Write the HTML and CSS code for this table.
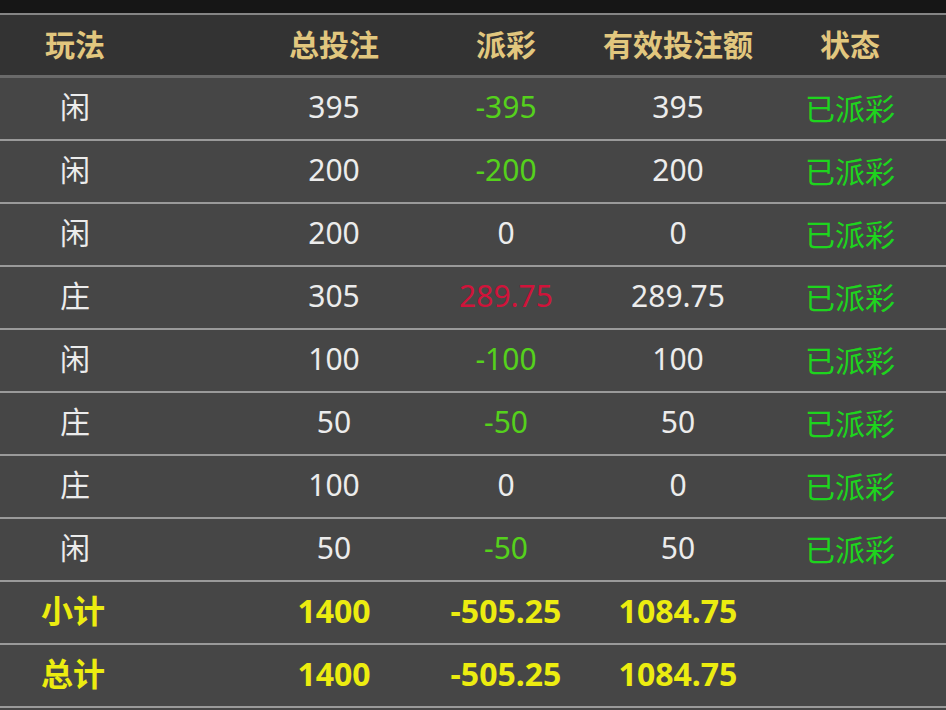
FILE: index.html
```html
<!DOCTYPE html>
<html lang="zh-CN">
<head>
  <meta charset="UTF-8">
  <meta name="viewport" content="width=device-width, initial-scale=1.0">
  <title>投注记录</title>
  <link rel="stylesheet" href="styles.css">
</head>
<body>
  <div class="topbar"></div>
  <table class="bets">
    <colgroup>
      <col class="c-play">
      <col class="c-bet">
      <col class="c-pay">
      <col class="c-valid">
      <col class="c-status">
    </colgroup>
    <thead>
      <tr>
        <th>玩法</th>
        <th class="bet">总投注</th>
        <th>派彩</th>
        <th>有效投注额</th>
        <th>状态</th>
      </tr>
    </thead>
    <tbody>
      <tr><td>闲</td><td class="bet">395</td><td class="lose">-395</td><td>395</td><td class="done">已派彩</td></tr>
      <tr><td>闲</td><td class="bet">200</td><td class="lose">-200</td><td>200</td><td class="done">已派彩</td></tr>
      <tr><td>闲</td><td class="bet">200</td><td>0</td><td>0</td><td class="done">已派彩</td></tr>
      <tr><td>庄</td><td class="bet">305</td><td class="win">289.75</td><td>289.75</td><td class="done">已派彩</td></tr>
      <tr><td>闲</td><td class="bet">100</td><td class="lose">-100</td><td>100</td><td class="done">已派彩</td></tr>
      <tr><td>庄</td><td class="bet">50</td><td class="lose">-50</td><td>50</td><td class="done">已派彩</td></tr>
      <tr><td>庄</td><td class="bet">100</td><td>0</td><td>0</td><td class="done">已派彩</td></tr>
      <tr><td>闲</td><td class="bet">50</td><td class="lose">-50</td><td>50</td><td class="done">已派彩</td></tr>
      <tr class="sum"><td>小计</td><td class="bet">1400</td><td>-505.25</td><td>1084.75</td><td></td></tr>
      <tr class="sum"><td>总计</td><td class="bet">1400</td><td>-505.25</td><td>1084.75</td><td></td></tr>
    </tbody>
  </table>
</body>
</html>
```

FILE: styles.css
```css
body {
  margin: 0;
  background-color: #464646;
  font-family: "Noto Sans", "Noto Sans CJK SC", sans-serif;
  color: #ececec;
}

.topbar {
  height: 13px;
  background-color: #161616;
  border-bottom: 2px solid #858585;
}

.bets {
  width: 946px;
  border-collapse: collapse;
  table-layout: fixed;
}

.c-play { width: 150px; }
.c-bet { width: 270px; }
.c-pay { width: 172px; }
.c-valid { width: 172px; }
.c-status { width: 182px; }

.bets th,
.bets td {
  padding: 0 0 4px;
  line-height: 1;
  text-align: center;
  white-space: nowrap;
}

.bets .bet {
  padding-left: 98px;
}

.bets tr > :last-child {
  padding-right: 10px;
}

.bets th {
  height: 56px;
  background-color: #333333;
  border-bottom: 3px solid #6a6a6a;
  color: #e2c77e; /* gold header */
  font-family: "Noto Sans CJK SC", sans-serif;
  font-size: 30px;
  font-weight: bold;
}

.bets td {
  height: 57px;
  border-bottom: 2px solid #9a9a9a;
  font-size: 30px;
}

.lose { color: #55d11c; }
.win { color: #d0133a; }
.done {
  color: #1ed41e;
  font-family: "Noto Sans CJK SC", sans-serif;
}

.sum td {
  color: #ecec10;
  font-size: 32px;
  font-weight: bold;
}

.sum td:first-child {
  text-align: left;
  padding-left: 41px;
}
```
